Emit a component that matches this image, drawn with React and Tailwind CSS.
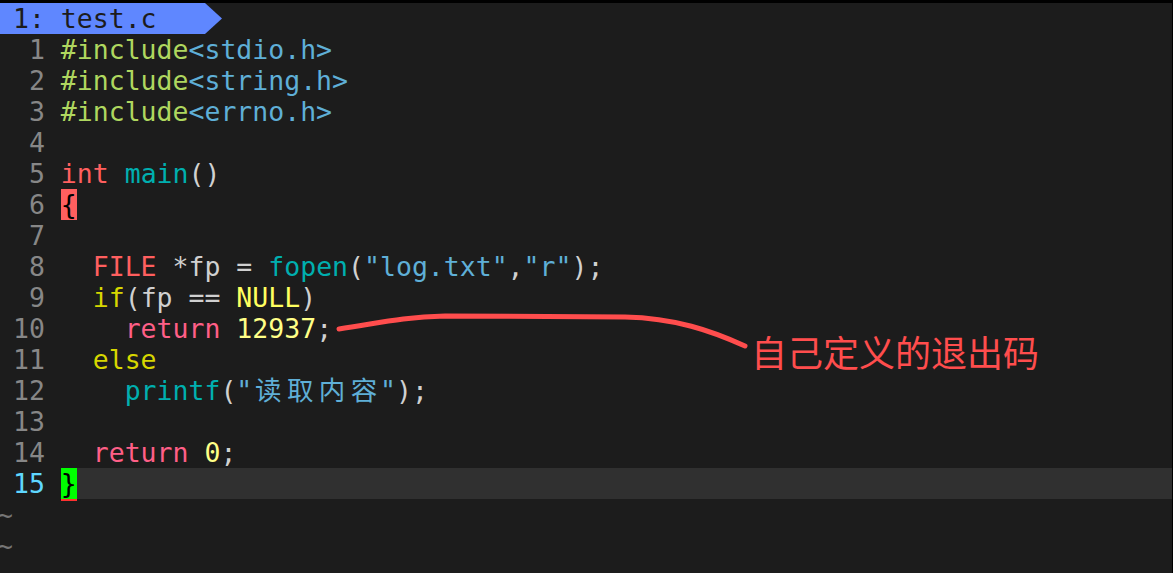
import React from "react";

// vim-like colours
const c = {
  txt: "text-[#d0d0d0]",
  pre: "text-[#afd75f]",
  inc: "text-[#5fafd7]",
  type: "text-[#ff5f5f]",
  ret: "text-[#ff5f87]",
  fn: "text-[#00afaf]",
  str: "text-[#5fafd7]",
  cond: "text-[#d7d700]",
  con: "text-[#ffff5f]",
  num: "text-[#ffff87]",
};

const Cjk = ({ children }) => (
  <span className="inline-block w-[2ch] text-center">{children}</span>
);

const lines = [
  [["#include", c.pre], ["<stdio.h>", c.inc]],
  [["#include", c.pre], ["<string.h>", c.inc]],
  [["#include", c.pre], ["<errno.h>", c.inc]],
  [],
  [["int", c.type], [" ", c.txt], ["main", c.fn], ["()", c.txt]],
  "open",
  [],
  [
    ["  ", c.txt],
    ["FILE", c.type],
    [" *fp = ", c.txt],
    ["fopen", c.fn],
    ["(", c.txt],
    ['"log.txt"', c.str],
    [",", c.txt],
    ['"r"', c.str],
    [");", c.txt],
  ],
  [["  ", c.txt], ["if", c.cond], ["(fp == ", c.txt], ["NULL", c.con], [")", c.txt]],
  [["    ", c.txt], ["return", c.ret], [" ", c.txt], ["12937", c.num], [";", c.txt]],
  [["  ", c.txt], ["else", c.cond]],
  "printf",
  [],
  [["  ", c.txt], ["return", c.ret], [" ", c.txt], ["0", c.num], [";", c.txt]],
  "close",
];

const CodeLine = ({ n, line }) => {
  const current = n === 15;
  let body;
  if (line === "open") {
    body = <span className="bg-[#ff5f5f] text-black">{"{"}</span>;
  } else if (line === "close") {
    body = (
      <span className="bg-[#00ff00] text-black border-b-2 border-[#ff3030]">{"}"}</span>
    );
  } else if (line === "printf") {
    body = (
      <>
        <span className={c.txt}>{"    "}</span>
        <span className={c.fn}>printf</span>
        <span className={c.txt}>(</span>
        <span className={c.str}>
          "<Cjk>读</Cjk><Cjk>取</Cjk><Cjk>内</Cjk><Cjk>容</Cjk>"
        </span>
        <span className={c.txt}>);</span>
      </>
    );
  } else {
    body = line.map(([t, cls], i) => (
      <span key={i} className={cls}>
        {t}
      </span>
    ));
  }
  return (
    <div className="flex h-[31px] leading-[31px]">
      <span className={current ? "text-[#5fd7ff]" : "text-[#878787]"}>
        {String(n).padStart(3) + " "}
      </span>
      <div className={`flex-1 ${current ? "bg-[#303030]" : ""}`}>{body}</div>
    </div>
  );
};

export default function App() {
  return (
    <div className="relative h-[573px] w-[1173px] overflow-hidden bg-[#1c1c1c] border-t-[3px] border-r border-black font-['DejaVu_Sans_Mono','Noto_Sans_CJK_SC',monospace] text-[26.5px] whitespace-pre">
      <div className="ml-[-3px]">
        {/* tabline */}
        <div className="flex h-[31px] leading-[31px]">
          <div className="w-[208px] bg-[#5f87ff] text-[#1c1c1c]">{" 1: test.c"}</div>
          <svg width="17" height="31" viewBox="0 0 17 31" className="block">
            <polygon points="0,0 17,15.5 0,31" fill="#5f87ff" />
          </svg>
        </div>

        {lines.map((line, i) => (
          <CodeLine key={i} n={i + 1} line={line} />
        ))}

        <div className="h-[31px] leading-[31px] text-[#767676]">~</div>
        <div className="h-[31px] leading-[31px] text-[#767676]">~</div>
      </div>

      {/* hand-drawn annotation */}
      <svg
        className="absolute left-0 top-[-3px] pointer-events-none"
        width="1173"
        height="573"
        viewBox="0 0 1173 573"
      >
        <path
          d="M339 329 C 375 324, 400 317, 445 316 L 625 317 C 675 318, 712 331, 745 346"
          stroke="#ff4d4d"
          strokeWidth="5"
          strokeLinecap="round"
          fill="none"
        />
      </svg>
      <div className="absolute left-[751px] top-[330px] font-['Noto_Sans_CJK_SC',sans-serif] text-[36px] leading-none text-[#ff4d4d]">
        自己定义的退出码
      </div>
    </div>
  );
}
